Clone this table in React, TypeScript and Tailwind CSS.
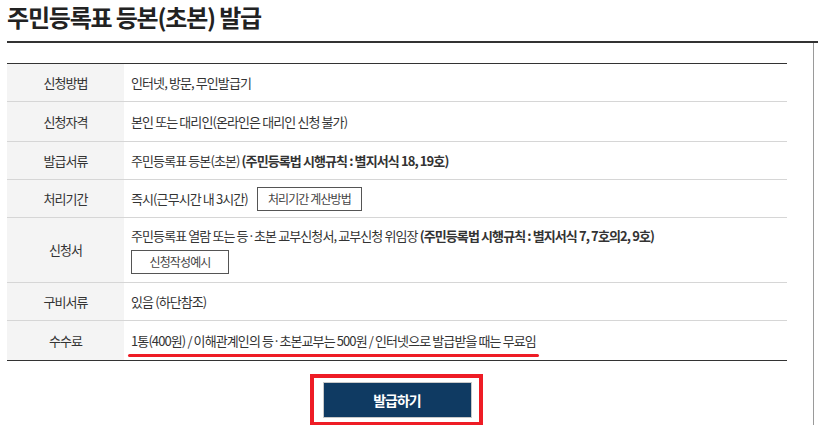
type Row = {
  label: string
  h: string
  last?: boolean
  children: React.ReactNode
}

function InfoRow({ label, h, last, children }: Row) {
  return (
    <div className={`grid grid-cols-[117px_1fr] ${h} ${last ? '' : 'border-b border-[#d6d6d6]'}`}>
      <div className="bg-[#f4f4f4] flex items-center justify-center text-[#333]">{label}</div>
      <div className="flex flex-col justify-center pl-[7px] text-[#333]">{children}</div>
    </div>
  )
}

function OutlineButton({ text, w }: { text: string; w: string }) {
  return (
    <span className={`inline-flex items-center justify-center ${w} h-[24px] border border-[#555] text-[12px] text-[#444] bg-white`}>
      {text}
    </span>
  )
}

export default function App() {
  return (
    <div
      className="pl-[7px] bg-white w-[818px] h-[425px] overflow-hidden text-[13px] tracking-[-0.9px]"
      style={{ fontFamily: '"Noto Sans CJK KR", "Noto Sans", sans-serif' }}
    >
      {/* Title */}
      <div className="h-[43px] border-b-2 border-[#333] flex items-start">
        <h2 className="text-[24px] font-bold leading-[34px] text-[#222] tracking-[-1.2px]">
          주민등록표 등본(초본) 발급
        </h2>
      </div>

      {/* Body with right rule */}
      <div className="w-[807px] h-[382px] border-r border-[#9a9a9a] pt-[20px]">
        <div className="w-[780px] border-t border-b border-[#333]">
          <InfoRow label="신청방법" h="h-[38px]">
            <span>인터넷, 방문, 무인발급기</span>
          </InfoRow>
          <InfoRow label="신청자격" h="h-[40px]">
            <span>본인 또는 대리인(온라인은 대리인 신청 불가)</span>
          </InfoRow>
          <InfoRow label="발급서류" h="h-[38px]">
            <span>
              주민등록표 등본(초본) <b>(주민등록법 시행규칙 : 별지서식 18, 19호)</b>
            </span>
          </InfoRow>
          <InfoRow label="처리기간" h="h-[38px]">
            <div className="flex items-center gap-[9px]">
              <span>즉시(근무시간 내 3시간)</span>
              <OutlineButton text="처리기간 계산방법" w="w-[105px]" />
            </div>
          </InfoRow>
          <InfoRow label="신청서" h="h-[65px]">
            <span>
              주민등록표 열람 또는 등·초본 교부신청서, 교부신청 위임장{' '}
              <b>(주민등록법 시행규칙 : 별지서식 7, 7호의2, 9호)</b>
            </span>
            <div className="mt-[5px]">
              <OutlineButton text="신청작성예시" w="w-[98px]" />
            </div>
          </InfoRow>
          <InfoRow label="구비서류" h="h-[38px]">
            <span>있음 (하단참조)</span>
          </InfoRow>
          <InfoRow label="수수료" h="h-[39px]" last>
            <div className="relative w-fit">
              <span>1통(400원) / 이해관계인의 등·초본교부는 500원 / 인터넷으로 발급받을 때는 무료임</span>
              <span className="absolute left-[-3px] right-[-3px] bottom-[-7px] h-[3px] rounded-full bg-[#ee1c25]" />
            </div>
          </InfoRow>
        </div>

        {/* Issue button */}
        <div className="w-[780px] flex justify-center pt-[13px]">
          <div className="border-[4px] border-[#ee1c25] pl-[9px] pr-[7px] pt-[4px] pb-[4px] ml-[-2px]">
            <button className="w-[149px] h-[36px] bg-[#0f3a62] border border-[#c9c9c9] text-white text-[14px] font-bold tracking-[-1px]">
              발급하기
            </button>
          </div>
        </div>
      </div>
    </div>
  )
}
